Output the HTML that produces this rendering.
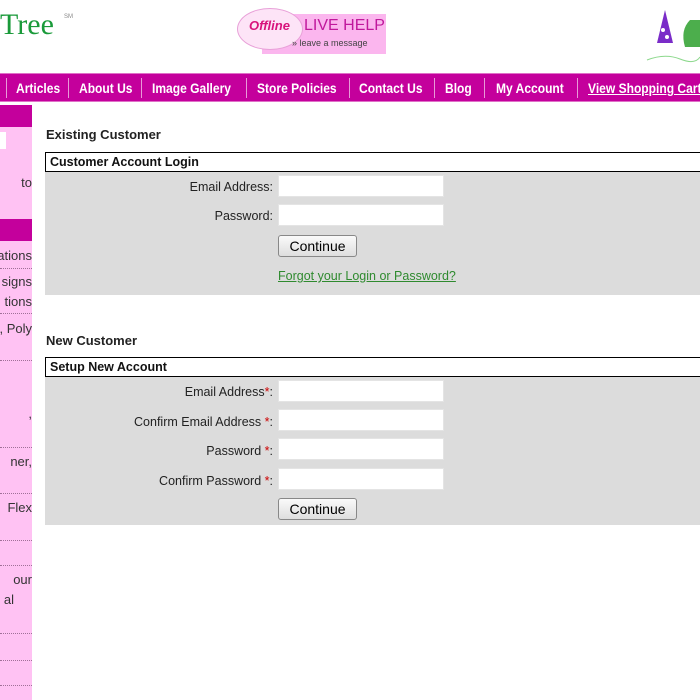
<!DOCTYPE html><html><head><style>
body{margin:0;width:700px;height:700px;overflow:hidden;background:#fff;font-family:"Liberation Sans",sans-serif;position:relative}
.a{position:absolute}
.nav{left:0;top:73px;width:700px;height:29px;background:#c4009c;border-top:1px solid #e070c8;border-bottom:1px solid #e070c8;box-sizing:border-box}
.nav span{position:absolute;top:6px;color:#fff;font:bold 14px "Liberation Sans",sans-serif;white-space:nowrap;transform:scaleX(0.86);transform-origin:left}
.sep{position:absolute;top:4px;width:1px;height:20px;background:#e89ad8}
.side{left:0;top:105px;width:32px;height:595px;background:#ffc2f3;overflow:hidden}
.sh{position:absolute;left:0;width:32px;height:22px;background:#c4009c}
.st{position:absolute;right:0;font-size:13px;color:#333;white-space:nowrap}
.dot{position:absolute;left:0;width:32px;border-top:1px dotted #a07098}
.h{font-weight:bold;font-size:13px;color:#222}
.box{left:45px;width:660px;background:#dcdcdc}
.bh{position:absolute;left:0;top:0;width:100%;height:20px;background:#fff;border:1px solid #000;box-sizing:border-box;font-weight:bold;font-size:12.5px;padding:2px 4px;color:#111}
.lb{position:absolute;right:432px;font-size:12.5px;color:#222;text-align:right;white-space:nowrap}
.in{position:absolute;left:233px;width:166px;height:22px;background:#fff;border:1px solid #e4e4e4;box-sizing:border-box}
.btn{position:absolute;left:233px;width:79px;height:22px;border:1px solid #888;border-radius:3px;background:linear-gradient(#fafafa,#dedede);box-sizing:border-box;font:14px "Liberation Sans",sans-serif;text-align:center;line-height:20px;color:#000}
.r{color:#c00}
</style></head><body>
<div class="a" style="left:0;top:8px;font:30px 'Liberation Serif',serif;color:#1a9a3a">Tree</div>
<div class="a" style="left:64px;top:14px;font-size:6px;color:#888">SM</div>
<div class="a" style="left:262px;top:14px;width:124px;height:40px;background:#fbb6ee"></div>
<div class="a" style="left:237px;top:8px;width:64px;height:40px;border-radius:50%;background:#fde4f7;border:1px solid #e8a0d8"></div>
<div class="a" style="left:249px;top:18px;font:italic bold 13px 'Liberation Sans',sans-serif;color:#d8147c">Offline</div>
<div class="a" style="left:304px;top:17px;font:16px 'Liberation Sans',sans-serif;color:#c0189c">LIVE HELP</div>
<div class="a" style="left:292px;top:38px;font:9px 'Liberation Sans',sans-serif;color:#444">» leave a message</div>
<svg class="a" style="left:645px;top:5px" width="55" height="60"><path d="M20 5 L12 38 L28 38 Z" fill="#7a2cc8"/><circle cx="18" cy="25" r="2" fill="#fff"/><circle cx="22" cy="32" r="2" fill="#fff"/><path d="M45 15 Q35 25 40 42 L55 42 L55 15Z" fill="#4cae4c"/><path d="M2 55 Q20 48 35 54 T55 52" stroke="#8cd88c" fill="none"/></svg>
<div class="a nav">
<div class="sep" style="left:6px"></div><span style="left:16px">Articles</span>
<div class="sep" style="left:68px"></div><span style="left:79px">About Us</span>
<div class="sep" style="left:141px"></div><span style="left:152px">Image Gallery</span>
<div class="sep" style="left:246px"></div><span style="left:257px">Store Policies</span>
<div class="sep" style="left:349px"></div><span style="left:359px">Contact Us</span>
<div class="sep" style="left:434px"></div><span style="left:445px">Blog</span>
<div class="sep" style="left:484px"></div><span style="left:496px">My Account</span>
<div class="sep" style="left:577px"></div><span style="left:588px;text-decoration:underline">View Shopping Cart</span>
</div>
<div class="a side">
<div class="sh" style="top:0"></div>
<div style="position:absolute;left:0;top:27px;width:6px;height:17px;background:#fff"></div>
<div class="st" style="top:70px">to</div>
<div class="sh" style="top:114px"></div>
<div class="st" style="top:143px">ations</div><div class="dot" style="top:163px"></div>
<div class="st" style="top:169px">signs</div><div class="st" style="top:189px">tions</div><div class="dot" style="top:208px"></div>
<div class="st" style="top:216px">, Poly</div><div class="dot" style="top:255px"></div>
<div class="st" style="top:301px">,</div><div class="dot" style="top:342px"></div>
<div class="st" style="top:349px">ner,</div><div class="dot" style="top:388px"></div>
<div class="st" style="top:395px">Flex</div><div class="dot" style="top:435px"></div>
<div class="dot" style="top:460px"></div>
<div class="st" style="top:467px">our</div><div class="st" style="top:487px;right:18px">al</div><div class="dot" style="top:528px"></div>
<div class="dot" style="top:555px"></div><div class="dot" style="top:580px"></div>
</div>
<div class="a h" style="left:46px;top:127px">Existing Customer</div>
<div class="a box" style="top:152px;height:143px">
<div class="bh">Customer Account Login</div>
<div class="lb" style="top:28px">Email Address:</div><div class="in" style="top:23px"></div>
<div class="lb" style="top:57px">Password:</div><div class="in" style="top:52px"></div>
<div class="btn" style="top:83px">Continue</div>
<div class="a" style="left:233px;top:117px;font-size:12.5px;color:#2f8a2f;text-decoration:underline">Forgot your Login or Password?</div>
</div>
<div class="a h" style="left:46px;top:333px">New Customer</div>
<div class="a box" style="top:357px;height:168px">
<div class="bh">Setup New Account</div>
<div class="lb" style="top:28px">Email Address<span class="r">*</span>:</div><div class="in" style="top:23px"></div>
<div class="lb" style="top:58px">Confirm Email Address <span class="r">*</span>:</div><div class="in" style="top:52px"></div>
<div class="lb" style="top:87px">Password <span class="r">*</span>:</div><div class="in" style="top:81px"></div>
<div class="lb" style="top:117px">Confirm Password <span class="r">*</span>:</div><div class="in" style="top:111px"></div>
<div class="btn" style="top:141px">Continue</div>
</div>
</body></html>
